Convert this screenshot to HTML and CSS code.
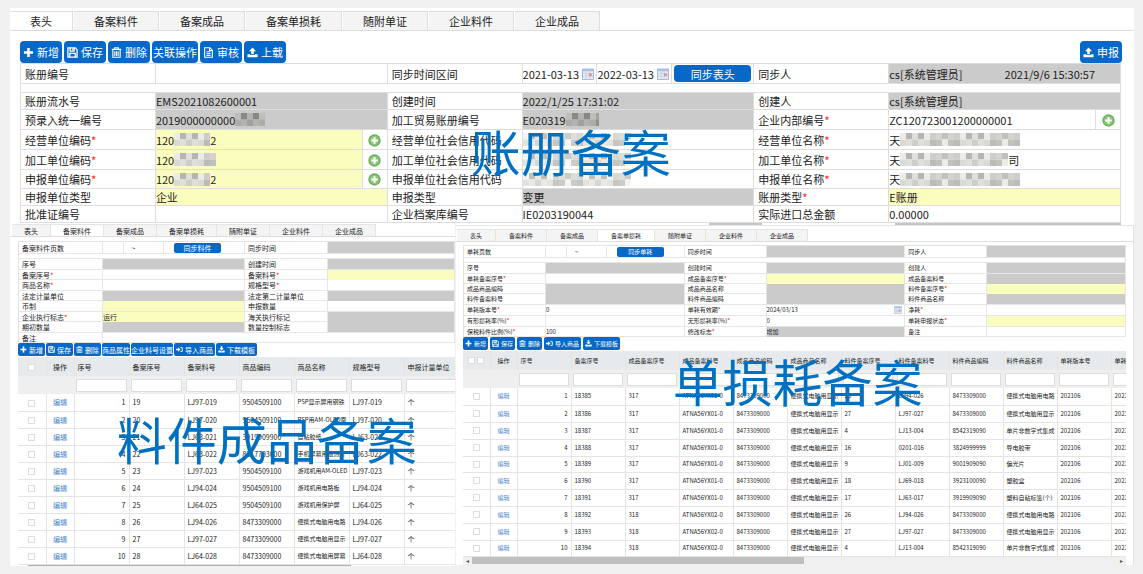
FILE: index.html
```html
<!DOCTYPE html>
<html lang="zh-CN">
<head>
<meta charset="utf-8">
<title>账册备案</title>
<link rel="stylesheet" href="styles.css">
</head>
<body>
<svg class="defs" aria-hidden="true">
  <symbol id="i-plus" viewBox="0 0 12 12"><path d="M4.6 1h2.8v3.6H11v2.8H7.4V11H4.6V7.4H1V4.6h3.6z" fill="currentColor"/></symbol>
  <symbol id="i-save" viewBox="0 0 12 12"><path d="M1 1h8l2 2v8H1z M3.4 1v3.4h4.4V1 M3 11V7h6v4" fill="none" stroke="currentColor" stroke-width="1.4"/><path d="M5.8 1.4h1.4v2.4H5.8z" fill="currentColor"/></symbol>
  <symbol id="i-trash" viewBox="0 0 12 12"><path d="M.8 2.6h10.4M4 2.4V.8h4v1.6M2 3v8.2h8V3M4.2 4.5v5.2M6 4.5v5.2M7.8 4.5v5.2" fill="none" stroke="currentColor" stroke-width="1.2"/></symbol>
  <symbol id="i-file" viewBox="0 0 12 12"><path d="M1.8.8h5.7l2.7 2.7v7.7H1.8z M7.2.8v3h3 M3.8 5.2h4.4M3.8 7.2h4.4M3.8 9.2h4.4" fill="none" stroke="currentColor" stroke-width="1.2"/></symbol>
  <symbol id="i-up" viewBox="0 0 12 12"><path d="M6 .5l3.8 4H7.4v3.3H4.6V4.5H2.2z M.5 7.8h3v1h5v-1h3v3.4H.5z" fill="currentColor"/></symbol>
  <symbol id="i-down" viewBox="0 0 12 12"><path d="M6 7.8l3.8-4H7.4V.5H4.6v3.3H2.2z M.5 7.8h3l2.5 1.6 2.5-1.6h3v3.4H.5z" fill="currentColor"/></symbol>
  <symbol id="i-in" viewBox="0 0 12 12"><path d="M0 4.6h3.6V2.2L7.6 6l-4 3.8V7.4H0z M7.4 1.6H9A2.6 2.6 0 0 1 11.6 4v4A2.6 2.6 0 0 1 9 10.4H7.4V8.8H9l1-1V4.2l-1-1H7.4z" fill="currentColor"/></symbol>
  <symbol id="i-cal" viewBox="0 0 12 12"><path d="M.5 1h11v10.5H.5z" fill="#e3eaf8" stroke="#a9b9dc"/><path d="M1 1.2h10v2H1z" fill="#a8bfe8"/><path d="M1 5.5h10M1 8h10M4 3.5v8M7.2 3.5v8" stroke="#bdc9e2" stroke-width=".6"/><path d="M7 5.4h2.8v2.8H7z" fill="#ec9370"/></symbol>
  <symbol id="i-add" viewBox="0 0 12 12"><circle cx="6" cy="6" r="5.7" fill="#66ad5b"/><circle cx="6" cy="6" r="4.5" fill="#8cc47c"/><path d="M5 3h2v2h2v2H7v2H5V7H3V5h2z" fill="#fff"/></symbol>
</svg>
<main class="page">
  <section class="sheet top">
    <nav class="tabs" id="tabs-a"></nav>
    <div class="toolbar" id="bar-a"></div>
    <form class="form" id="form-a"></form>
    <h1 class="title title-a">账册备案</h1>
  </section>
  <div class="lower">
    <section class="sheet left small">
      <nav class="tabs" id="tabs-b"></nav>
      <div class="body">
        <form class="form" id="form-b"></form>
        <div class="toolbar" id="bar-b"></div>
        <div class="gridwrap"><table class="grid" id="grid-b"></table></div>
        <div class="underbar"></div>
      </div>
      <h2 class="title title-b">料件成品备案</h2>
    </section>
    <section class="right small">
      <div class="peek"><i></i><i></i></div>
      <div class="sheet">
        <nav class="tabs" id="tabs-c"></nav>
        <div class="body">
          <form class="form three" id="form-c"></form>
          <div class="toolbar" id="bar-c"></div>
          <div class="gridwrap"><table class="grid" id="grid-c"></table></div>
          <div class="scroll"><span>◂</span><i></i><span>▸</span></div>
        </div>
        <h2 class="title title-c">单损耗备案</h2>
      </div>
    </section>
  </div>
</main>
<script src="app.js"></script>
</body>
</html>
```

FILE: styles.css
```css
* { box-sizing: border-box; }
body {
  margin: 0;
  background: #f1f1f1;
  color: #222;
  font: 11px/16px "Noto Sans CJK SC", sans-serif;
}
button, input { font: inherit; color: inherit; }
i { font-style: normal; }
.defs { position: absolute; width: 0; height: 0; }
.page { padding: 8px 9px 7px 10px; overflow: hidden; }
.sheet { position: relative; background: #fff; }

.tabs { display: flex; border-bottom: 1px solid #ddd; }
.tabs button {
  flex: none;
  height: 19px;
  padding: 0 20px;
  border: 1px solid #ddd;
  border-width: 1px 1px 0 0;
  background: #f4f4f4;
  line-height: 18px;
  white-space: nowrap;
}
.tabs button.on { background: #fff; }
.top .tabs { padding-top: 3px; }
.top .tabs button + button { margin-left: 1px; }
.top .tabs button { min-width: 63px; }

.toolbar { display: flex; gap: 2px; }
.btn {
  display: flex;
  align-items: center;
  justify-content: center;
  gap: 3px;
  height: 22px;
  padding: 0 3px;
  border: 0;
  border-radius: 4px;
  background: #0768c7;
  color: #fff;
  white-space: nowrap;
}
.btn.bare { padding: 0 1px; }
.btn svg { width: 11px; height: 11px; flex: none; }
.top .toolbar { padding: 10px 12px 0 10px; }
.top .toolbar .end { margin-left: auto; }

.form { margin: 0 13px 0 10px; border: 1px solid #ddd; border-width: 1px 0 0 1px; }
.row {
  display: grid;
  grid-template-columns: repeat(3, minmax(0, 135fr) minmax(0, 232fr));
  height: 20px;
  border-bottom: 1px solid #ddd;
}
.row.mid { height: 19px; }
.row.low { height: 17px; }
.row.gap { height: 9px; border-right: 1px solid #ddd; }
.row label {
  display: flex;
  align-items: center;
  padding-left: 4px;
  border-right: 1px solid #ddd;
  white-space: nowrap;
}
.row label b { color: #f33; font-weight: 500; }
.val { display: flex; align-items: stretch; min-width: 0; border-right: 1px solid #ddd; overflow: hidden; }
.val input { flex: 1; width: 100%; min-width: 0; padding: 0; border: 0; background: transparent; outline: 0; }
.val.grey { background: #cbcbcb; }
.val.yellow input, .val.yellow .masked { background: #fbfdbf; }
.masked { display: flex; flex: 1; align-items: center; overflow: hidden; white-space: nowrap; }
.masked svg { height: 13px; flex: none; }
.add {
  flex: none;
  width: 25px;
  padding: 2px 0 0;
  border: 0;
  border-left: 1px solid #ddd;
  background: #fff;
  line-height: 1;
}
.add svg { width: 13px; height: 13px; }
.date { display: flex; flex: 1; align-items: center; border-right: 1px solid #ddd; padding-right: 2px; }
.date svg { width: 12px; height: 12px; flex: none; }
.sync { flex: none; width: 77px; height: 17px; margin: 1px 2px; align-self: center; }

.title {
  position: absolute;
  margin: 0;
  color: #0070c0;
  font-size: 50px;
  font-weight: 400;
  line-height: 50px;
  white-space: nowrap;
  pointer-events: none;
}
.title-a { left: 41%; top: 117px; }
.title-b { left: 24%; top: 190px; }
.title-c { left: 32%; top: 129px; }

.lower { display: grid; grid-template-columns: minmax(0, 445fr) minmax(0, 678fr); gap: 1px; align-items: start; }
.small { font-size: 7px; line-height: 10px; }
.small .tabs { padding: 1px 0 0 2px; }
.small .tabs button { height: 12px; padding: 0 12px; line-height: 10px; border-color: #e4e4e4; }
.small .body { padding: 4px 0 0 8px; overflow: hidden; }
.small .form { margin: 0; border-color: #e2e2e2; }
.small .row { height: 10px; border-color: #e6e6e6; }
.small .row.tall { height: 11px; }
.small .row.first { height: 12px; }
.small .row.gap { height: 5px; }
.small .row label { padding-left: 3px; border-color: #e6e6e6; }
.small .val { border-color: #e6e6e6; }
.left .row { grid-template-columns: minmax(0, 84fr) minmax(0, 142fr) minmax(0, 83fr) minmax(0, 127fr); }
.left .row.wide { grid-template-columns: minmax(0, 84fr) minmax(0, 352fr); }
.pager { display: flex; flex: 1; align-items: center; }
.pager input { flex: none; width: 21px; border-right: 1px solid #e6e6e6; }
.pager span { width: 19px; text-align: center; }
.pager input + .btn { margin-left: 10px; }
.small .btn { height: 13px; padding: 0 2px; gap: 2px; border-radius: 2px; }
.small .btn.bare { padding: 0; }
.small .btn svg { width: 7px; height: 7px; }
.small .pager .btn { width: 47px; height: 10px; }
.small .toolbar { gap: 2px; height: 14px; }
.left .toolbar { gap: 1px; }

.gridwrap { overflow: hidden; }
.grid { table-layout: fixed; border-collapse: collapse; width: 441px; }
.grid th { height: 19px; padding: 0 3px; background: #e6eaed; font-weight: 400; text-align: left; white-space: nowrap; border-right: 1px solid #e0e4e7; }
.grid .filter td { height: 18px; padding: 0 2px; background: #efefef; border: 0; }
.filter input { display: block; width: 100%; height: 13px; padding: 0; border: 1px solid #ddd; background: #fff; }
.grid td { height: 17px; padding: 0 0 0 3px; border: 1px solid #e4e4e4; border-width: 0 1px 1px 0; overflow: hidden; white-space: nowrap; }
.grid td.n { padding-right: 3px; text-align: right; }
.grid td:nth-child(7) { font-size: 6px; }
.grid .c { padding: 0; text-align: center; }
.grid a { color: #4a86cc; text-decoration: none; }
.grid input[type=checkbox] { appearance: none; width: 7px; height: 7px; margin: 0 1px; border: 1px solid #ddd; background: #fff; vertical-align: middle; }
.underbar { width: 74%; height: 1px; margin-left: 10px; background: #b0b0b0; }

.right { font-size: 6px; }
.right .tabs button { padding: 0 13px; min-width: 38px; }
.right .tabs { padding-left: 1px; }
.peek { display: flex; justify-content: flex-end; gap: 20%; height: 3px; padding-right: 13px; background: #fff; border-bottom: 1px solid #e6e6e6; }
.peek i { width: 8%; background: #c6c6c6; }
.peek i + i { width: 34%; }
.right .sheet { padding-top: 2px; border-right: 1px solid #e4e4e4; }
.right .body { padding: 3px 7px 0 7px; }
.right .row { grid-template-columns: repeat(3, minmax(0, 82fr) minmax(0, 139fr)); }
.right .grid { width: 702px; }
.right .grid tbody tr:nth-child(5n) td { height: 16px; }
.right .val svg { width: 8px; height: 8px; margin: 0 2px; align-self: center; }
.scroll { display: flex; align-items: center; height: 8px; background: #f0f0f0; color: #555; }
.scroll span { width: 9px; text-align: center; }
.scroll i { width: 50%; height: 7px; background: #bfbfbf; }
.scroll span:last-child { margin-left: auto; }
```

FILE: app.js
```js
const $ = id => document.getElementById(id);
const icon = n => `<svg aria-hidden="true"><use href="#i-${n}"/></svg>`;
const button = ([ic, text, cls = '']) =>
  `<button type="button" class="btn ${ic ? '' : 'bare'} ${cls}">${ic ? icon(ic) : ''}${text}</button>`;

const tabNames = ['表头', '备案料件', '备案成品', '备案单损耗', '随附单证', '企业料件', '企业成品'];
[['a', 0], ['b', 1], ['c', 3]].forEach(([k, on]) => {
  $('tabs-' + k).innerHTML = tabNames.map((t, i) =>
    `<button type="button" class="${i === on ? 'on' : ''}">${t}</button>`).join('');
});

const base = [['plus', '新增'], ['save', '保存'], ['trash', '删除']];
$('bar-a').innerHTML = [...base, ['', '关联操作'], ['file', '审核'], ['up', '上载'], ['up', '申报', 'end']].map(button).join('');
$('bar-b').innerHTML = [...base, ['', '商品属性'], ['', '企业料号设置'], ['in', '导入商品'], ['down', '下载模板']].map(button).join('');
$('bar-c').innerHTML = [...base, ['in', '导入商品'], ['down', '下载模板']].map(button).join('');

// Tiled block that hides part of a value
function mosaic(width, dark) {
  let out = '';
  for (let x = 0; x < width; x += 6)
    for (let y = 0; y < 12; y += 6) {
      const v = (x * 37 + y * 53 + x * x * 7) % 60;
      const g = dark - v + 30;
      out += `<rect x="${x}" y="${y}" width="6" height="6" fill="rgb(${g},${g},${g - 4})"/>`;
    }
  return `<svg width="${width}" viewBox="0 0 ${width} 12" preserveAspectRatio="none" aria-hidden="true">${out}</svg>`;
}

let uid = 0;
// Field: [label, value, flags]; flags: g grey, y yellow, p add button, d calendar, * required
function field([label, value = '', flags = '']) {
  const id = 'f' + (++uid);
  const cls = flags.includes('g') ? 'grey' : flags.includes('y') ? 'yellow' : '';
  let inner;
  if (value && value.html) inner = value.html(id);
  else inner = `<input id="${id}" value="${value}">`;
  if (flags.includes('p')) inner += `<button type="button" class="add" aria-label="选择">${icon('add')}</button>`;
  if (flags.includes('d')) inner += icon('cal');
  return `<label for="${id}">${label}${flags.includes('*') ? '<b>*</b>' : ''}</label><div class="val ${cls}">${inner}</div>`;
}
const masked = (pre, w, post = '', dark = 205) => ({
  html: id => `<output class="masked" id="${id}">${pre}${mosaic(w, dark)}${post}</output>`
});
const pager = text => ({
  html: id => `<div class="pager"><input id="${id}"><span>~</span><input aria-label="结束页">${button(['', text])}</div>`
});
const form = (id, rows) => {
  $(id).innerHTML = rows.map(([cls, ...f]) => `<div class="row ${cls}">${f.map(field).join('')}</div>`).join('');
};

form('form-a', [
  ['', ['账册编号'], ['同步时间区间', { html: id =>
    `<div class="date"><input id="${id}" value="2021-03-13">${icon('cal')}</div><div class="date"><input aria-label="结束" value="2022-03-13">${icon('cal')}</div><button type="button" class="btn sync">同步表头</button>` }],
    ['同步人', { html: id => `<input id="${id}" value="cs[系统管理员]"><input aria-label="同步时间" value="2021/9/6 15:30:57">` }, 'g']],
  ['gap'],
  ['low', ['账册流水号', 'EMS2021082600001', 'g'], ['创建时间', '2022/1/25 17:31:02', 'g'], ['创建人', 'cs[系统管理员]', 'g']],
  ['', ['预录入统一编号', masked('2019000000000', 30, '', 160), 'g'], ['加工贸易账册编号', masked('E020319', 33, '', 160), 'g'], ['企业内部编号', 'ZC120723001200000001', '*p']],
  ['', ['经营单位编码', masked('120', 36, '2'), 'y*p'], ['经营单位社会信用代码', masked('', 108, '', 215)], ['经营单位名称', masked('天', 120), '*']],
  ['', ['加工单位编码', masked('120', 42), 'y*p'], ['加工单位社会信用代码', masked('', 108, '', 215)], ['加工单位名称', masked('天', 108, '司'), '*']],
  ['mid', ['申报单位编码', masked('120', 36, '2'), 'y*p'], ['申报单位社会信用代码', masked('', 108, '', 215)], ['申报单位名称', masked('天', 120), '*']],
  ['low', ['申报单位类型', '企业', 'y'], ['申报类型', '变更', 'g'], ['账册类型', 'E账册', 'y*']],
  ['low', ['批准证编号'], ['企业档案库编号', 'IE0203190044'], ['实际进口总金额', '0.00000']]
]);

form('form-b', [
  ['first', ['备案料件页数', pager('同步料件')], ['同步时间', '', 'g']],
  ['gap'],
  ['tall', ['序号', '', 'g'], ['创建时间', '', 'g']],
  ['', ['备案序号', '', '*'], ['备案料号', '', 'y*']],
  ['tall', ['商品名称', '', '*'], ['规格型号', '', '*']],
  ['', ['法定计量单位', '', 'g'], ['法定第二计量单位', '', 'g']],
  ['tall', ['币制', '', 'y'], ['申报数量']],
  ['', ['企业执行标志', '运行', 'y*'], ['海关执行标记', '', 'g']],
  ['tall', ['期初数量', '', 'g'], ['数量控制标志', '', 'g']],
  ['wide', ['备注']]
]);

form('form-c', [
  ['first', ['单耗页数', pager('同步单耗')], ['同步时间', '', 'g'], ['同步人', '', 'g']],
  ['gap'],
  ['tall', ['序号', '', 'g'], ['创建时间', '', 'g'], ['创建人', '', 'g']],
  ['', ['单耗备案序号', '', '*'], ['成品备案序号', '', 'y*'], ['成品备案料号', '', 'g']],
  ['', ['成品商品编码', '', 'g'], ['成品商品名称', '', 'g'], ['料件备案序号', '', 'y*']],
  ['tall', ['料件备案料号', '', 'g'], ['料件商品编码', '', 'g'], ['料件商品名称', '', 'g']],
  ['tall', ['单耗版本号', '0', '*'], ['单耗有效期', '2024/03/13', '*d'], ['净耗', '', '*']],
  ['tall', ['有形损耗率(%)', '', '*'], ['无形损耗率(%)', '0', '*'], ['单耗申报状态', '', 'y*']],
  ['', ['保税料件比例(%)', '100', '*'], ['修改标志', '增加', 'g*'], ['备注']]
]);

const check = '<input type="checkbox" aria-label="选择行">';
function grid(id, narrow, wide, heads, boxes, rows) {
  $(id).innerHTML =
    `<colgroup><col style="width:${narrow}px"><col style="width:${narrow}px">${heads.map(() => `<col style="width:${wide}px">`).join('')}</colgroup>` +
    `<thead><tr><th class="c">${check.repeat(boxes)}</th><th class="c">操作</th>${heads.map(h => `<th>${h}</th>`).join('')}</tr>` +
    `<tr class="filter"><td></td><td></td>${heads.map(h => `<td><input aria-label="筛选${h}"></td>`).join('')}</tr></thead><tbody>` +
    rows.map((r, i) => `<tr><td class="c">${check}</td><td class="c"><a href="#">编辑</a></td><td class="n">${i + 1}</td>${r.map(v => `<td>${v}</td>`).join('')}</tr>`).join('') +
    '</tbody>';
}

grid('grid-b', 28, 55, ['序号', '备案序号', '备案料号', '商品编码', '商品名称', '规格型号', '申报计量单位'], 1, [
  ['019', '9504509100', 'PSP显示屏用钢铁', 'LJ97'],
  ['020', '9504509100', 'PSP用AM-OLED面', 'LJ97'],
  ['021', '3919909900', '自粘胶纸', 'LJ63'],
  ['022', '8517703000', '手机屏幕用散热片', 'LJ63'],
  ['023', '9504509100', '游戏机用AM-OLED', 'LJ97'],
  ['024', '9504509100', '游戏机用电路板', 'LJ94'],
  ['025', '9504509100', '游戏机用保护屏', 'LJ64'],
  ['026', '8473309000', '便携式电脑用电路', 'LJ94'],
  ['027', '8473309000', '便携式电脑用显示', 'LJ97'],
  ['028', '8473309000', '便携式电脑用屏幕', 'LJ64']
].map(([n, code, name, p]) => [+n, `${p}-${n}`, code, name, `${p}-${n}`, '个']));

grid('grid-c', 27, 54, ['序号', '备案序号', '成品备案序号', '成品备案料号', '成品商品编码', '成品商品名称', '料件备案序号', '料件备案料号', '料件商品编码', '料件商品名称', '单耗版本号', '单耗有效期'], 2, [
  [26, 'LJ94-026', '8473309000', '便携式电脑用电路'],
  [27, 'LJ97-027', '8473309000', '便携式电脑用显示'],
  [4, 'LJ13-004', '8542319090', '单片非数字式集成'],
  [16, '0201-016', '3824999999', '导电胶带'],
  [9, 'LJ01-009', '9001909090', '偏光片'],
  [18, 'LJ69-018', '3923100090', '塑胶盒'],
  [17, 'LJ63-017', '3919909090', '塑料自粘标签(个)'],
  [26, 'LJ94-026', '8473309000', '便携式电脑用电路'],
  [27, 'LJ97-027', '8473309000', '便携式电脑用显示'],
  [4, 'LJ13-004', '8542319090', '单片非数字式集成']
].map((r, i) => [18385 + i, i < 7 ? 317 : 318, i < 7 ? 'ATNA56YX01-0' : 'ATNA56YX02-0', '8473309000', '便携式电脑用显示', ...r, '202106', '202106']));
```
